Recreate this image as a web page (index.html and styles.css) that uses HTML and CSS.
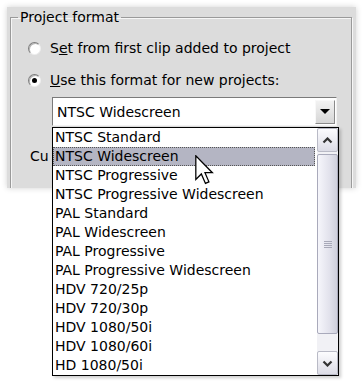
FILE: index.html
```html
<!DOCTYPE html>
<html lang="en">

<head>
    <meta charset="UTF-8">
    <title>Project format</title>
    <link rel="stylesheet" href="styles.css">
</head>

<body>
    <div class="stage">
        <div class="panel">
            <fieldset class="group">
                <legend>Project format</legend>

                <label class="option">
                    <span class="radio"></span>
                    <span>S<u>e</u>t from first clip added to project</span>
                </label>
                <label class="option">
                    <span class="radio checked"></span>
                    <span><u>U</u>se this format for new projects:</span>
                </label>

                <div class="combo">
                    <span class="combo-text">NTSC Widescreen</span>
                    <span class="combo-button"><span class="arrow-down"></span></span>
                </div>

                <!-- only the start of this label shows, the open list covers the rest -->
                <p class="current">Cu</p>
            </fieldset>
        </div>

        <!-- open drop-down list of the combo -->
        <div class="dropdown">
            <ul class="items">
                <li>NTSC Standard</li>
                <li class="selected">NTSC Widescreen</li>
                <li>NTSC Progressive</li>
                <li>NTSC Progressive Widescreen</li>
                <li>PAL Standard</li>
                <li>PAL Widescreen</li>
                <li>PAL Progressive</li>
                <li>PAL Progressive Widescreen</li>
                <li>HDV 720/25p</li>
                <li>HDV 720/30p</li>
                <li>HDV 1080/50i</li>
                <li>HDV 1080/60i</li>
                <li>HD 1080/50i</li>
            </ul>
            <div class="scrollbar">
                <div class="sb-button">
                    <svg width="11" height="7" viewBox="0 0 11 7"><path d="M1.5 5.5 L5.5 1.5 L9.5 5.5" fill="none" stroke="#333" stroke-width="2.2"/></svg>
                </div>
                <div class="sb-thumb">
                    <span class="grip"></span>
                    <span class="grip"></span>
                    <span class="grip"></span>
                    <span class="grip"></span>
                </div>
                <div class="sb-track"></div>
                <div class="sb-button">
                    <svg width="11" height="7" viewBox="0 0 11 7"><path d="M1.5 1.5 L5.5 5.5 L9.5 1.5" fill="none" stroke="#333" stroke-width="2.2"/></svg>
                </div>
            </div>
        </div>

        <svg class="cursor" width="19" height="30" viewBox="0 0 12 19">
            <path d="M0.5 0.5 L0.5 15.5 L4 12 L6.6 18 L8.8 17 L6.3 11.2 L11 11.2 Z" fill="#fff" stroke="#000" stroke-width="0.8" stroke-linejoin="miter"/>
        </svg>
    </div>
</body>

</html>
```

FILE: styles.css
```css
body {
    margin: 0;
    background-color: #ffffff;
    font-family: "DejaVu Sans", Verdana, sans-serif;
    font-size: 14px;
    color: #000;
}

.stage {
    position: relative;
    width: 362px;
    height: 381px;
    overflow: hidden;
}

.panel {
    margin: 7px 0 0 7px;
    width: 349px;
    height: 181px;
    background-color: #dcdcdc;
    overflow: hidden;
    box-shadow: 0 0 6px rgba(0, 0, 0, 0.18);
}

.group {
    margin: 2px 0 0 3px;
    padding: 0 0 0 17px;
    width: 342px;
    height: 300px;
    box-sizing: border-box;
    border: 1px solid #9a9a9a;
    box-shadow: inset 1px 1px 0 #f6f6f6, 1px 1px 0 #f6f6f6;
}

.group legend {
    margin-left: -10px;
    padding: 0 2px;
    line-height: 16px;
}

.option {
    display: flex;
    align-items: center;
    gap: 9px;
    height: 20px;
    margin-top: 13px;
}

.option + .option {
    margin-top: 12px;
}

.radio {
    width: 11px;
    height: 11px;
    border-radius: 50%;
    background-color: #fff;
    border: 1px solid;
    border-color: #7c7c7c #eeeeee #eeeeee #7c7c7c;
    box-shadow: inset 1px 1px 0 #b4b4b4;
    display: flex;
    align-items: center;
    justify-content: center;
}

.radio.checked::after {
    content: "";
    width: 5px;
    height: 5px;
    border-radius: 50%;
    background-color: #000;
}

.combo {
    display: flex;
    align-items: center;
    justify-content: space-between;
    margin: 7px 0 0 24px;
    width: 285px;
    height: 29px;
    box-sizing: border-box;
    background-color: #fff;
    border: 1px solid;
    border-color: #7a7a7a #f2f2f2 #f2f2f2 #7a7a7a;
    padding: 1px 1px 1px 4px;
}

.combo-button {
    width: 20px;
    height: 24px;
    box-sizing: border-box;
    border: 1px solid;
    border-color: #f8f8f8 #8a8a8a #8a8a8a #f8f8f8;
    background: linear-gradient(#f2f2f2, #d6d6d6);
    display: flex;
    align-items: center;
    justify-content: center;
}

.arrow-down {
    width: 0;
    height: 0;
    border-left: 5px solid transparent;
    border-right: 5px solid transparent;
    border-top: 5px solid #000;
}

.current {
    margin: 21px 0 0 2px;
    line-height: 19px;
    white-space: nowrap;
}

.dropdown {
    position: absolute;
    left: 52px;
    top: 127px;
    width: 287px;
    box-sizing: border-box;
    border: 1px solid #000;
    background-color: #fff;
    display: flex;
    box-shadow: 2px 2px 3px rgba(0, 0, 0, 0.2);
}

.items {
    list-style: none;
    margin: 0;
    padding: 0;
    flex: 1;
}

.items li {
    height: 19px;
    line-height: 19px;
    padding-left: 2px;
    margin-right: 2px;
    white-space: nowrap;
}

.items li.selected {
    background-color: #b4b5c3;
    outline: 1px dotted #555;
    outline-offset: -1px;
}

.scrollbar {
    width: 21px;
    display: flex;
    flex-direction: column;
    background-color: #f1f1f5;
}

.sb-button {
    height: 24px;
    box-sizing: border-box;
    border: 1px solid #b9bac6;
    border-radius: 2px;
    background: linear-gradient(#fcfcfe, #dcdce6);
    display: flex;
    align-items: center;
    justify-content: center;
}

.sb-thumb {
    margin-top: 2px;
    height: 180px;
    box-sizing: border-box;
    border: 1px solid #a9aabb;
    border-radius: 2px;
    background: linear-gradient(90deg, #f6f6fb, #e2e2ec 60%, #cfd0dc);
    display: flex;
    flex-direction: column;
    align-items: center;
    justify-content: center;
    gap: 1px;
}

.grip {
    width: 8px;
    height: 1px;
    background-color: #a8a9b8;
}

.sb-track {
    flex: 1;
}

.cursor {
    position: absolute;
    left: 195px;
    top: 155px;
}
```
